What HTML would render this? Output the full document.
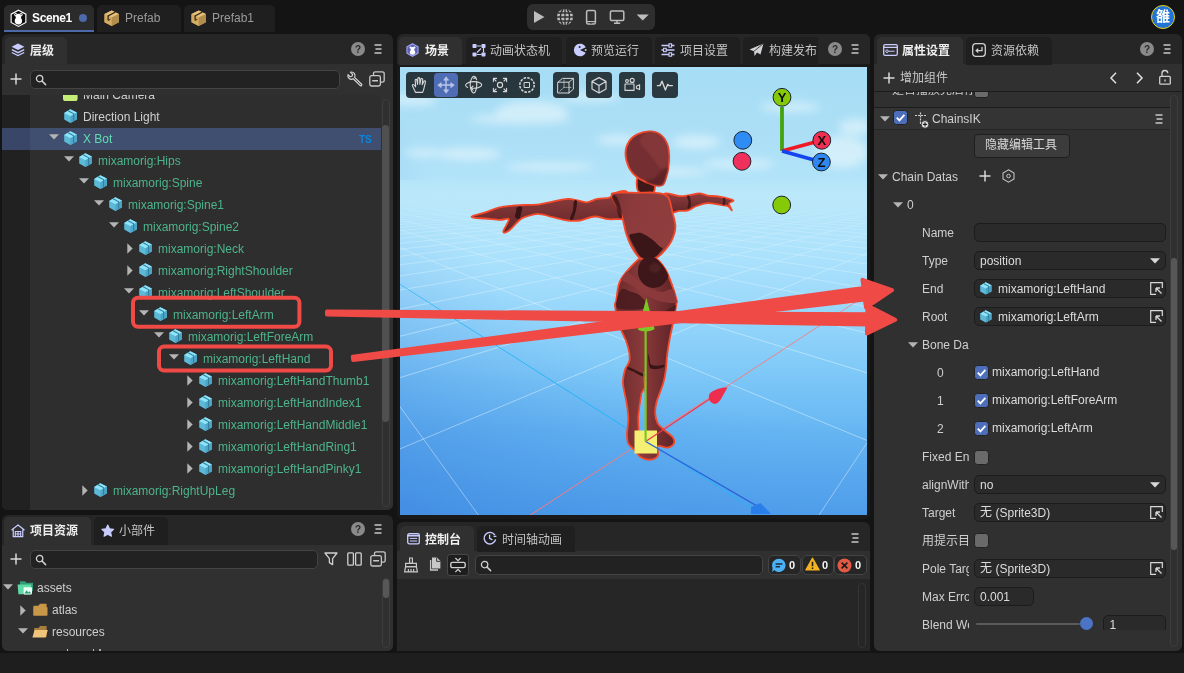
<!DOCTYPE html>
<html><head><meta charset="utf-8"><title>LayaAir IDE</title>
<style>
*{box-sizing:border-box;margin:0;padding:0}
html,body{width:1184px;height:673px;overflow:hidden}
body{background:#141414;font-family:"Liberation Sans",sans-serif;font-size:12px;color:#cfcfcf;position:relative;line-height:14px}
.a{position:absolute}
svg{display:block;position:absolute;overflow:visible}
svg.cj{position:absolute}
svg.cj text{font-family:"Liberation Sans","Noto Sans CJK SC",sans-serif;font-size:12px}
.panel{position:absolute;background:#262626;border-radius:6px;overflow:hidden}
.ptab{position:absolute;background:#303030;border-radius:5px 5px 0 0}
.ptab.off{background:#1f1f1f}
.body{position:absolute;background:#303030}
.inp{position:absolute;background:#222;border:1px solid #444;border-radius:5px}
.fld{position:absolute;background:#2a2a2a;border:1px solid #1c1c1c;border-radius:5px}
.t{position:absolute;white-space:nowrap;height:14px;line-height:14px}
.g{color:#4db48c}
.row{position:absolute;left:0;width:100%;height:22px}
.lbl{position:absolute;white-space:nowrap;height:14px;line-height:14px;color:#cfcfcf;overflow:hidden}
.cb{position:absolute;width:14px;height:14px;border-radius:3.5px;background:#4d6fbb;border:1px solid #222}
.cb.off{background:#6a6a6a}
</style></head><body><div id="root" style="position:absolute;left:0;top:0;width:1184px;height:673px;opacity:0.999">
<svg width="0" height="0" style="position:absolute">
<defs>
<symbol id="cube" viewBox="0 0 14 15">
<path d="M6.6 0.2 L13.4 3.6 L13.4 11 L6.6 14.6 L0.2 11 L0.2 4.2Z" fill="#5db9d8"/>
<path d="M6.6 0.2 L13.4 3.6 L6.8 7.4 L0.2 4.2Z" fill="#8ee5fa"/>
<path d="M6.8 7.4 L13.4 3.6 L13.4 11 L6.6 14.6Z" fill="#4ba6c8"/>
<path d="M3.6 2 L4.8 1.3 L10.6 4.6 L10.6 12.4 L9.5 13 L9.5 5.2Z" fill="#347d9b"/>
</symbol>
<symbol id="box" viewBox="0 0 16 17">
<g transform="translate(16,0) scale(-1,1)">
<path d="M8 0.5 L15.5 4 L15.5 12.5 L8 16.5 L0.5 12.5 L0.5 4Z" fill="#c8a05a"/>
<path d="M8 0.5 L15.5 4 L8 7.8 L0.5 4Z" fill="#e6c27c"/>
<path d="M0.5 4 L8 7.8 L8 16.5 L0.5 12.5Z" fill="#b38d4a"/>
<path d="M8 7.8 L15.5 4 L15.5 12.5 L8 16.5Z" fill="#d3ab62"/>
<path d="M3.6 2.4 L4.9 1.8 L12.4 5.6 L12.4 10.6 L11 11.2 L11 6.3Z" fill="#3a2d18"/>
<path d="M9.4 9.6L11 10.4" stroke="#3a2d18" stroke-width="1"/>
</g>
</symbol>
<symbol id="help" viewBox="0 0 14 14"><circle cx="7" cy="7" r="7" fill="#8a8a8a"/><text x="7" y="10.6" font-family="Liberation Sans" font-weight="bold" font-size="10" text-anchor="middle" fill="#2a2a2a">?</text></symbol>
<symbol id="menu" viewBox="0 0 8 10"><path d="M0.5 1H7.5M1.5 5H7.5M0.5 9H7.5" stroke="#c8c8c8" stroke-width="1.4" fill="none"/></symbol>
<symbol id="mag" viewBox="0 0 12 12"><circle cx="4.6" cy="4.6" r="3.2" stroke="#d0d0d0" stroke-width="1.3" fill="none"/><path d="M7 7L10.6 10.6" stroke="#d0d0d0" stroke-width="1.5" stroke-linecap="round"/></symbol>
<symbol id="plus" viewBox="0 0 12 12"><path d="M6 0.5V11.5M0.5 6H11.5" stroke="#d8d8d8" stroke-width="1.5"/></symbol>
<symbol id="pick" viewBox="0 0 13 13"><path d="M12.3 6V0.7H0.7V12.3H6" stroke="#d8d8d8" stroke-width="1.2" fill="none"/><path d="M6 6H10M6 6V10M6.3 6.3L11.5 11.5" stroke="#d8d8d8" stroke-width="1.3" fill="none"/></symbol>
</defs></svg>

<!-- ===== top bar ===== -->
<div class="a" id="tab1" style="left:4px;top:5px;width:90px;height:27px;background:#2b2b2b;border-radius:5px 5px 0 0;border-bottom:2px solid #4c69a8"></div>
<div class="a" style="left:97px;top:5px;width:84px;height:27px;background:#1f1f1f;border-radius:5px 5px 0 0"></div>
<div class="a" style="left:184px;top:5px;width:91px;height:27px;background:#1f1f1f;border-radius:5px 5px 0 0"></div>
<svg class="a" style="left:10.4px;top:8.6px" width="17" height="18.6" viewBox="0 0 18 19"><path d="M9 0.9L16.8 5.1V13.9L9 18.1L1.2 13.9V5.1Z" fill="#0c0c0c" stroke="#fff" stroke-width="1.2"/><circle cx="6.1" cy="5.6" r="1.7" fill="#fff"/><circle cx="11.7" cy="5.6" r="1.7" fill="#fff"/><circle cx="8.9" cy="7.6" r="3" fill="#fff"/><ellipse cx="8.9" cy="12.4" rx="3.9" ry="3.7" fill="#fff"/><circle cx="6.1" cy="5.6" r="0.7" fill="#0c0c0c"/><circle cx="11.7" cy="5.6" r="0.7" fill="#0c0c0c"/></svg>
<div class="t" style="left:32px;top:11px;color:#fff;font-weight:bold;letter-spacing:-0.35px">Scene1</div>
<div class="a" style="left:79px;top:14px;width:8px;height:8px;border-radius:4px;background:#4c69a8"></div>
<svg class="a" style="left:104px;top:9.5px" width="15.4" height="16.6"><use href="#box"/></svg>
<div class="t" style="left:125px;top:11px;color:#9a9a9a">Prefab</div>
<svg class="a" style="left:191px;top:9.5px" width="15.4" height="16.6"><use href="#box"/></svg>
<div class="t" style="left:212px;top:11px;color:#9a9a9a">Prefab1</div>

<div class="a" style="left:527px;top:4px;width:128px;height:26px;background:#2e2e2e;border-radius:6px"></div>
<svg class="a" style="left:527px;top:4px" width="128" height="26" viewBox="0 0 128 26">
<path d="M7 7V19L17.4 13Z" fill="#bdbdbd"/>
<circle cx="38" cy="13" r="8" fill="#bdbdbd"/>
<g stroke="#2e2e2e" stroke-width="1.3" fill="none"><path d="M30 13H46M31 9H45M31 17H45M38 5V21"/><path d="M36 5.2C32.6 9 32.6 17 36 20.8M40 5.2C43.4 9 43.4 17 40 20.8"/></g>
<rect x="59.6" y="6.4" width="8.8" height="13.6" rx="1.6" fill="none" stroke="#bdbdbd" stroke-width="1.5"/><path d="M59.6 17.6H68.4" stroke="#bdbdbd" stroke-width="1.2"/><path d="M63 19H65" stroke="#2e2e2e" stroke-width="0.9"/>
<rect x="83.4" y="7" width="13.4" height="9.4" rx="1.2" fill="none" stroke="#bdbdbd" stroke-width="1.5"/><path d="M90 16.4V18.6M87 19.2H93.2" stroke="#bdbdbd" stroke-width="1.5"/>
<path d="M109.6 10.4H121.8L115.7 16.6Z" fill="#bdbdbd"/>
</svg>

<div class="a" style="left:1150.8px;top:4.8px;width:24.4px;height:24.4px;border-radius:12.2px;background:#2173d4;border:1.5px solid #ecce12"></div>
<svg class="cj" width="14.00" height="16.80" viewBox="0 0 14.00 16.80" style="left:1156.1px;top:9.4px"><text x="0" y="12.3" style="font-size:14px" font-weight="bold" fill="#fff">雒</text></svg>

<!-- ===== hierarchy panel ===== -->
<div class="panel" id="hier" style="left:2px;top:34px;width:391px;height:476px">
 <div class="ptab" style="left:3px;top:3px;width:62px;height:28px"></div>
 <div class="body" style="left:0;top:30px;width:391px;height:31px"></div>
 <div class="body" id="tree" style="left:0;top:61px;width:391px;height:415px;background:#2e2e2e;overflow:hidden">
<div class="a" style="left:0;top:0;width:28px;height:415px;background:#212121"></div>
<div class="a" id="treerows" style="left:0;top:0;width:379px;height:415px">
<div class="row" style="top:-11px"><svg style="left:61.4px;top:3px" width="14.6" height="14" viewBox="0 0 14.6 14"><rect x="0" y="0" width="14.6" height="14" rx="2.6" fill="#c4ee76"/></svg><div class="t" style="left:81px;top:4px;color:#cfcfcf">Main Camera</div></div>
<div class="row" style="top:11px"><svg style="left:61.7px;top:2.9px" width="13.4" height="14.5"><use href="#cube"/></svg><div class="t" style="left:81px;top:4px;color:#cfcfcf">Direction Light</div></div>
<div class="row" style="top:33px;background:#404e70"><svg style="left:47px;top:6.2px" width="10" height="6"><path d="M0 0.3H10L5 5.6Z" fill="#b4b4b4"/></svg><svg style="left:61.7px;top:2.9px" width="13.4" height="14.5"><use href="#cube"/></svg><div class="t" style="left:81px;top:4px;color:#60dcae">X Bot</div><div class="t" style="left:357px;top:5px;color:#0b84dd;font-size:10px;font-weight:bold">TS</div></div>
<div class="row" style="top:55px"><svg style="left:62px;top:6.2px" width="10" height="6"><path d="M0 0.3H10L5 5.6Z" fill="#b4b4b4"/></svg><svg style="left:76.7px;top:2.9px" width="13.4" height="14.5"><use href="#cube"/></svg><div class="t" style="left:96px;top:4px;color:#4db48c">mixamorig:Hips</div></div>
<div class="row" style="top:77px"><svg style="left:77px;top:6.2px" width="10" height="6"><path d="M0 0.3H10L5 5.6Z" fill="#b4b4b4"/></svg><svg style="left:91.7px;top:2.9px" width="13.4" height="14.5"><use href="#cube"/></svg><div class="t" style="left:111px;top:4px;color:#4db48c">mixamorig:Spine</div></div>
<div class="row" style="top:99px"><svg style="left:92px;top:6.2px" width="10" height="6"><path d="M0 0.3H10L5 5.6Z" fill="#b4b4b4"/></svg><svg style="left:106.7px;top:2.9px" width="13.4" height="14.5"><use href="#cube"/></svg><div class="t" style="left:126px;top:4px;color:#4db48c">mixamorig:Spine1</div></div>
<div class="row" style="top:121px"><svg style="left:107px;top:6.2px" width="10" height="6"><path d="M0 0.3H10L5 5.6Z" fill="#b4b4b4"/></svg><svg style="left:121.7px;top:2.9px" width="13.4" height="14.5"><use href="#cube"/></svg><div class="t" style="left:141px;top:4px;color:#4db48c">mixamorig:Spine2</div></div>
<div class="row" style="top:143px"><svg style="left:125px;top:4.6px" width="6" height="11"><path d="M0.3 0.3V10.7L5.7 5.5Z" fill="#b4b4b4"/></svg><svg style="left:136.7px;top:2.9px" width="13.4" height="14.5"><use href="#cube"/></svg><div class="t" style="left:156px;top:4px;color:#4db48c">mixamorig:Neck</div></div>
<div class="row" style="top:165px"><svg style="left:125px;top:4.6px" width="6" height="11"><path d="M0.3 0.3V10.7L5.7 5.5Z" fill="#b4b4b4"/></svg><svg style="left:136.7px;top:2.9px" width="13.4" height="14.5"><use href="#cube"/></svg><div class="t" style="left:156px;top:4px;color:#4db48c">mixamorig:RightShoulder</div></div>
<div class="row" style="top:187px"><svg style="left:122px;top:6.2px" width="10" height="6"><path d="M0 0.3H10L5 5.6Z" fill="#b4b4b4"/></svg><svg style="left:136.7px;top:2.9px" width="13.4" height="14.5"><use href="#cube"/></svg><div class="t" style="left:156px;top:4px;color:#4db48c">mixamorig:LeftShoulder</div></div>
<div class="row" style="top:209px"><svg style="left:137px;top:6.2px" width="10" height="6"><path d="M0 0.3H10L5 5.6Z" fill="#b4b4b4"/></svg><svg style="left:151.7px;top:2.9px" width="13.4" height="14.5"><use href="#cube"/></svg><div class="t" style="left:171px;top:4px;color:#4db48c">mixamorig:LeftArm</div></div>
<div class="row" style="top:231px"><svg style="left:152px;top:6.2px" width="10" height="6"><path d="M0 0.3H10L5 5.6Z" fill="#b4b4b4"/></svg><svg style="left:166.7px;top:2.9px" width="13.4" height="14.5"><use href="#cube"/></svg><div class="t" style="left:186px;top:4px;color:#4db48c">mixamorig:LeftForeArm</div></div>
<div class="row" style="top:253px"><svg style="left:167px;top:6.2px" width="10" height="6"><path d="M0 0.3H10L5 5.6Z" fill="#b4b4b4"/></svg><svg style="left:181.7px;top:2.9px" width="13.4" height="14.5"><use href="#cube"/></svg><div class="t" style="left:201px;top:4px;color:#4db48c">mixamorig:LeftHand</div></div>
<div class="row" style="top:275px"><svg style="left:185px;top:4.6px" width="6" height="11"><path d="M0.3 0.3V10.7L5.7 5.5Z" fill="#b4b4b4"/></svg><svg style="left:196.7px;top:2.9px" width="13.4" height="14.5"><use href="#cube"/></svg><div class="t" style="left:216px;top:4px;color:#4db48c">mixamorig:LeftHandThumb1</div></div>
<div class="row" style="top:297px"><svg style="left:185px;top:4.6px" width="6" height="11"><path d="M0.3 0.3V10.7L5.7 5.5Z" fill="#b4b4b4"/></svg><svg style="left:196.7px;top:2.9px" width="13.4" height="14.5"><use href="#cube"/></svg><div class="t" style="left:216px;top:4px;color:#4db48c">mixamorig:LeftHandIndex1</div></div>
<div class="row" style="top:319px"><svg style="left:185px;top:4.6px" width="6" height="11"><path d="M0.3 0.3V10.7L5.7 5.5Z" fill="#b4b4b4"/></svg><svg style="left:196.7px;top:2.9px" width="13.4" height="14.5"><use href="#cube"/></svg><div class="t" style="left:216px;top:4px;color:#4db48c">mixamorig:LeftHandMiddle1</div></div>
<div class="row" style="top:341px"><svg style="left:185px;top:4.6px" width="6" height="11"><path d="M0.3 0.3V10.7L5.7 5.5Z" fill="#b4b4b4"/></svg><svg style="left:196.7px;top:2.9px" width="13.4" height="14.5"><use href="#cube"/></svg><div class="t" style="left:216px;top:4px;color:#4db48c">mixamorig:LeftHandRing1</div></div>
<div class="row" style="top:363px"><svg style="left:185px;top:4.6px" width="6" height="11"><path d="M0.3 0.3V10.7L5.7 5.5Z" fill="#b4b4b4"/></svg><svg style="left:196.7px;top:2.9px" width="13.4" height="14.5"><use href="#cube"/></svg><div class="t" style="left:216px;top:4px;color:#4db48c">mixamorig:LeftHandPinky1</div></div>
<div class="row" style="top:385px"><svg style="left:80px;top:4.6px" width="6" height="11"><path d="M0.3 0.3V10.7L5.7 5.5Z" fill="#b4b4b4"/></svg><svg style="left:91.7px;top:2.9px" width="13.4" height="14.5"><use href="#cube"/></svg><div class="t" style="left:111px;top:4px;color:#4db48c">mixamorig:RightUpLeg</div></div>
</div>
<div class="a" style="left:0;top:33px;width:28px;height:22px;background:#3a4668"></div>
<div class="a" style="left:379px;top:0;width:12px;height:415px;background:#303030"></div>
<div class="a" style="left:380px;top:4px;width:8px;height:408px;border:1px solid #3d3d3d;border-radius:4px"></div>
<div class="a" style="left:380.2px;top:30px;width:7px;height:297px;background:#505050;border-radius:3.5px"></div>
</div>
<!-- hierarchy header + toolbar -->
<svg style="left:9px;top:9px" width="14" height="14" viewBox="0 0 14 14"><path d="M7 0.6L13.4 3.8L7 7L0.6 3.8Z" fill="#c9ccff"/><path d="M0.8 6.6L7 9.7L13.2 6.6M0.8 9.5L7 12.6L13.2 9.5" stroke="#c9ccff" stroke-width="1.3" fill="none"/></svg>
<svg class="cj" width="24.00" height="14.40" viewBox="0 0 24.00 14.40" style="left:28px;top:10.2px"><text x="0" y="10.6" font-weight="bold" fill="#eeeeee">层级</text></svg>
<svg style="left:349px;top:8px" width="14" height="14"><use href="#help"/></svg>
<svg style="left:372px;top:10px" width="8" height="10"><use href="#menu"/></svg>
<svg style="left:8px;top:39px" width="12" height="12"><use href="#plus"/></svg>
<div class="inp" style="left:28px;top:36px;width:310px;height:19px"></div>
<svg style="left:33px;top:40px" width="12" height="12"><use href="#mag"/></svg>
<svg style="left:345px;top:37px" width="16" height="16" viewBox="0 0 16 16"><path d="M14.6 13.2L7.6 6.4A3.6 3.6 0 0 0 3.4 1.2L5.6 3.4L5 5.2L3.2 5.8L1 3.6A3.6 3.6 0 0 0 6.2 7.8L13.2 14.6A1 1 0 0 0 14.6 13.2Z" stroke="#d4d4d4" stroke-width="1.2" fill="none" stroke-linejoin="round"/></svg>
<svg style="left:367px;top:37px" width="16" height="16" viewBox="0 0 16 16"><path d="M4.5 4.2V2.6A1.8 1.8 0 0 1 6.3 0.8H13.4A1.8 1.8 0 0 1 15.2 2.6V9.4A1.8 1.8 0 0 1 13.4 11.2H11.8" stroke="#c8c8c8" stroke-width="1.3" fill="none"/><rect x="0.8" y="4.6" width="10.6" height="10.4" rx="1.8" stroke="#c8c8c8" stroke-width="1.3" fill="none"/><path d="M3.2 9.8H9" stroke="#c8c8c8" stroke-width="1.6"/></svg>

</div>

<!-- ===== assets panel ===== -->
<div class="panel" id="assets" style="left:2px;top:515px;width:391px;height:136px">
 <div class="ptab" style="left:1.5px;top:2px;width:87.5px;height:29px"></div>
 <div class="ptab off" style="left:92px;top:2px;width:74px;height:29px"></div>
 <div class="body" style="left:0;top:30px;width:391px;height:106px"></div>
<svg style="left:9px;top:8.6px" width="14" height="14" viewBox="0 0 15 15"><path d="M7.5 1L14 6.2H12.6V13.6H2.4V6.2H1Z" stroke="#c9ccff" stroke-width="1.3" fill="none" stroke-linejoin="round"/><path d="M4.6 13.4V8H10.4V13.4M4.6 10.7H10.4M7.5 8V13.4" stroke="#c9ccff" stroke-width="1.2" fill="none"/></svg>
<svg class="cj" width="48.00" height="14.40" viewBox="0 0 48.00 14.40" style="left:28px;top:9.2px"><text x="0" y="10.6" font-weight="bold" fill="#eeeeee">项目资源</text></svg>
<svg style="left:99px;top:9px" width="13.5" height="13.5" viewBox="0 0 15 15"><path d="M7.5 1.2L9.5 5.3L14 5.9L10.7 9L11.6 13.5L7.5 11.3L3.4 13.5L4.3 9L1 5.9L5.5 5.3Z" fill="#c9ccff" stroke="#c9ccff" stroke-width="1.2" stroke-linejoin="round"/></svg>
<svg class="cj" width="36.00" height="14.40" viewBox="0 0 36.00 14.40" style="left:117px;top:9.2px"><text x="0" y="10.6" fill="#c4c4c4">小部件</text></svg>
<svg style="left:349px;top:7px" width="14" height="14"><use href="#help"/></svg>
<svg style="left:372px;top:9px" width="8" height="10"><use href="#menu"/></svg>
<svg style="left:8px;top:38px" width="12" height="12"><use href="#plus"/></svg>
<div class="inp" style="left:28px;top:35px;width:288px;height:19px"></div>
<svg style="left:33px;top:39px" width="12" height="12"><use href="#mag"/></svg>
<svg style="left:322px;top:37px" width="14" height="14" viewBox="0 0 14 14"><path d="M1 1H13L8.6 6.6V12.6L5.4 10.6V6.6Z" stroke="#d0d0d0" stroke-width="1.3" fill="none" stroke-linejoin="round"/></svg>
<svg style="left:345px;top:37px" width="15" height="14" viewBox="0 0 15 14"><rect x="0.8" y="0.8" width="5.6" height="12.4" rx="1" stroke="#d0d0d0" stroke-width="1.3" fill="none"/><rect x="8.6" y="0.8" width="5.6" height="12.4" rx="1" stroke="#d0d0d0" stroke-width="1.3" fill="none"/></svg>
<svg style="left:368px;top:36px" width="16" height="16" viewBox="0 0 16 16"><path d="M4.5 4.2V2.6A1.8 1.8 0 0 1 6.3 0.8H13.4A1.8 1.8 0 0 1 15.2 2.6V9.4A1.8 1.8 0 0 1 13.4 11.2H11.8" stroke="#c8c8c8" stroke-width="1.3" fill="none"/><rect x="0.8" y="4.6" width="10.6" height="10.4" rx="1.8" stroke="#c8c8c8" stroke-width="1.3" fill="none"/><path d="M3.2 9.8H9" stroke="#c8c8c8" stroke-width="1.6"/></svg>
<!-- rows -->
<svg style="left:1px;top:69.4px" width="10" height="6"><path d="M0 0.3H10L5 5.6Z" fill="#b4b4b4"/></svg>
<svg style="left:15px;top:64px" width="17" height="16" viewBox="0 0 17 16"><path d="M3 2.2H8L9.4 3.8H16V12H3Z" fill="#2f9c74"/><path d="M0.6 5.4H14.4L13.6 15.2H1.4Z" fill="#5fd9a6"/><rect x="6.6" y="8.2" width="8.4" height="7.2" rx="0.8" fill="#eafff5"/><path d="M7.4 14.6L9.6 11.2L11.2 13.4L12.4 12.2L14.2 14.6Z" fill="#2f9c74"/></svg>
<div class="t" style="left:35px;top:66px">assets</div>
<svg style="left:18px;top:90px" width="6" height="11"><path d="M0.3 0.3V10.7L5.7 5.5Z" fill="#b4b4b4"/></svg>
<svg style="left:31px;top:88px" width="15" height="13" viewBox="0 0 15 13"><path d="M0.5 2.8H5.4L7 0.8H13.6V12.4H0.5Z" fill="#c89848"/><path d="M0.5 4.2H14.5V12.4H0.5Z" fill="#c89848"/></svg>
<div class="t" style="left:50px;top:88px">atlas</div>
<svg style="left:16px;top:113.4px" width="10" height="6"><path d="M0 0.3H10L5 5.6Z" fill="#b4b4b4"/></svg>
<svg style="left:30px;top:110px" width="16" height="13" viewBox="0 0 16 13"><path d="M2.2 3H6.6L8 1H14.6V12H2.2Z" fill="#a87e3c"/><path d="M0.4 12.4L2.6 5H15.8L13.6 12.4Z" fill="#f0c67a"/></svg>
<div class="t" style="left:50px;top:110px">resources</div>
<div class="a" style="left:65.2px;top:134px;width:1.3px;height:2px;background:#bdbdbd"></div><div class="a" style="left:91px;top:134px;width:1.3px;height:2px;background:#bdbdbd"></div><div class="a" style="left:96.5px;top:134px;width:2.5px;height:2px;background:#a8a8a8"></div>
<div class="a" style="left:379px;top:62px;width:12px;height:74px;background:#303030"></div>
<div class="a" style="left:379.5px;top:63px;width:8px;height:70px;border:1px solid #3d3d3d;border-radius:4px"></div>
<div class="a" style="left:380.5px;top:64px;width:6px;height:19px;background:#575757;border-radius:3px"></div>
</div>

<!-- ===== scene panel ===== -->
<div class="panel" id="scene" style="left:397px;top:34px;width:473px;height:485px">
 <div class="body" style="left:0;top:30px;width:473px;height:455px;background:#1a1a1a"></div>
<div class="a" style="left:1px;top:0;width:472px;height:485px">
 <div class="ptab" style="left:1px;top:3px;width:63px;height:28px"></div>
 <div class="ptab off" style="left:68px;top:3px;width:96px;height:28px"></div>
 <div class="ptab off" style="left:168px;top:3px;width:86px;height:28px"></div>
 <div class="ptab off" style="left:257px;top:3px;width:85px;height:28px"></div>
 <div class="ptab off" style="left:345px;top:3px;width:78px;height:28px;border-radius:5px 0 0 0"></div>
 <div class="a" style="left:420px;top:0;width:52px;height:30px;background:#262626"></div>
<svg style="left:7.8px;top:9px" width="13" height="14" viewBox="0 0 14 15"><path d="M7 0.7L13 4.1V10.9L7 14.3L1 10.9V4.1Z" fill="#5c61bc" stroke="#a6a9f2" stroke-width="1.1"/><circle cx="5" cy="4.9" r="1.2" fill="#fff"/><circle cx="9" cy="4.9" r="1.2" fill="#fff"/><circle cx="7" cy="6.3" r="2.1" fill="#fff"/><ellipse cx="7" cy="9.8" rx="2.9" ry="2.7" fill="#fff"/></svg>
<svg class="cj" width="24.00" height="14.40" viewBox="0 0 24.00 14.40" style="left:27px;top:9.5px"><text x="0" y="10.6" font-weight="bold" fill="#f0f0f0">场景</text></svg>
<svg style="left:74px;top:9px" width="14" height="14" viewBox="0 0 14 14"><rect x="0.5" y="1" width="4" height="4" rx="0.8" fill="#c9ccff"/><rect x="9.5" y="1" width="4" height="4" rx="0.8" fill="#c9ccff"/><rect x="0.5" y="9.5" width="4" height="4" rx="0.8" fill="#c9ccff"/><rect x="9.5" y="9.5" width="4" height="4" rx="0.8" fill="#c9ccff"/><path d="M4.5 3H9.5M11.5 5V9.5M4.5 11.5H9.5M9 5.5L5 9.5" stroke="#c9ccff" stroke-width="1.2" fill="none"/></svg>
<svg class="cj" width="60.00" height="14.40" viewBox="0 0 60.00 14.40" style="left:92px;top:9.5px"><text x="0" y="10.6" fill="#c4c4c4">动画状态机</text></svg>
<svg style="left:175px;top:9px" width="14" height="14" viewBox="0 0 14 14"><path d="M7 7L12.8 4.2A6.3 6.3 0 1 0 12.8 9.8Z" fill="#c9ccff"/><circle cx="6.6" cy="4" r="1" fill="#262626"/><circle cx="12.6" cy="7" r="1" fill="#c9ccff"/></svg>
<svg class="cj" width="48.00" height="14.40" viewBox="0 0 48.00 14.40" style="left:193px;top:9.5px"><text x="0" y="10.6" fill="#c4c4c4">预览运行</text></svg>
<svg style="left:263px;top:9px" width="14" height="14" viewBox="0 0 14 14"><path d="M0.5 2.5H13.5M0.5 7H13.5M0.5 11.5H13.5" stroke="#c9ccff" stroke-width="1.3"/><rect x="8" y="0.8" width="2.6" height="3.4" fill="#1f1f1f" stroke="#c9ccff" stroke-width="1.1"/><rect x="2.6" y="5.3" width="2.6" height="3.4" fill="#1f1f1f" stroke="#c9ccff" stroke-width="1.1"/><rect x="8" y="9.8" width="2.6" height="3.4" fill="#1f1f1f" stroke="#c9ccff" stroke-width="1.1"/></svg>
<svg class="cj" width="48.00" height="14.40" viewBox="0 0 48.00 14.40" style="left:282px;top:9.5px"><text x="0" y="10.6" fill="#c4c4c4">项目设置</text></svg>
<svg style="left:351px;top:9px" width="15" height="14" viewBox="0 0 15 14"><path d="M14.5 0.5L0.5 6.5L5 8.2L5.6 13L8 9.6L11.5 11.5Z" fill="#d2d2d6"/><path d="M14.5 0.5L5 8.2" stroke="#1f1f1f" stroke-width="0.8"/></svg>
<svg class="cj" width="48.00" height="14.40" viewBox="0 0 48.00 14.40" style="left:371px;top:9.5px"><text x="0" y="10.6" fill="#c4c4c4">构建发布</text></svg>
<div class="a" style="left:420px;top:0;width:52px;height:30px;background:#262626"></div>
<svg style="left:430px;top:8px" width="14" height="14"><use href="#help"/></svg>
<svg style="left:453px;top:10px" width="8" height="10"><use href="#menu"/></svg>
<div class="a" id="viewport" style="left:2px;top:33px;width:467px;height:448px;overflow:hidden;background:#9fdcf8">
<svg id="scenesvg" style="left:0;top:0" width="467" height="448" viewBox="0 0 467 448">
<defs>
<linearGradient id="sky" x1="0" y1="0" x2="0" y2="1"><stop offset="0.000" stop-color="#a6ddf5"/><stop offset="0.148" stop-color="#acdff6"/><stop offset="0.230" stop-color="#b0e2f8"/><stop offset="0.268" stop-color="#b4e5f9"/><stop offset="0.320" stop-color="#b1e4fb"/><stop offset="0.371" stop-color="#afe4fc"/><stop offset="0.445" stop-color="#a6dffc"/><stop offset="0.521" stop-color="#9ad8fb"/><stop offset="0.669" stop-color="#80caf8"/><stop offset="0.817" stop-color="#66b6f3"/><stop offset="0.966" stop-color="#59a9ef"/><stop offset="1.000" stop-color="#56a6ee"/></linearGradient>
<linearGradient id="fog" x1="0" y1="0" x2="0" y2="1"><stop offset="0" stop-color="#b4e5f9" stop-opacity="1"/><stop offset="0.12" stop-color="#b3e5fa" stop-opacity="0.8"/><stop offset="0.35" stop-color="#b0e4fc" stop-opacity="0.45"/><stop offset="0.7" stop-color="#9cdafc" stop-opacity="0.14"/><stop offset="1" stop-color="#93d5fb" stop-opacity="0"/></linearGradient>
<radialGradient id="vig" cx="0.95" cy="-0.2" r="1.5"><stop offset="0.66" stop-color="#2b70d6" stop-opacity="0"/><stop offset="1" stop-color="#2b70d6" stop-opacity="0.42"/></radialGradient>
<linearGradient id="bodyg" x1="0" y1="0" x2="1" y2="0.3"><stop offset="0" stop-color="#7c3235"/><stop offset="0.35" stop-color="#8c3a3b"/><stop offset="1" stop-color="#903d3e"/></linearGradient>
<linearGradient id="legg" x1="0" y1="0" x2="1" y2="0"><stop offset="0" stop-color="#6b2a2d"/><stop offset="0.45" stop-color="#8a3a3a"/><stop offset="1" stop-color="#5c2226"/></linearGradient>
<linearGradient id="armg" x1="0" y1="0" x2="0" y2="1"><stop offset="0" stop-color="#8f3d3d"/><stop offset="1" stop-color="#622528"/></linearGradient>
<filter id="blur1" x="-10%" y="-10%" width="120%" height="120%"><feGaussianBlur stdDeviation="0.8"/></filter><filter id="blur6" x="-30%" y="-30%" width="160%" height="160%"><feGaussianBlur stdDeviation="4"/></filter>
<clipPath id="vp"><rect x="0" y="0" width="467" height="448"/></clipPath>
</defs>
<g clip-path="url(#vp)">
<rect width="467" height="448" fill="url(#sky)"/>
<g filter="url(#blur6)" fill="#eaf8fd" opacity="0.6">
<ellipse cx="12" cy="33" rx="26" ry="6"/>
<ellipse cx="132" cy="45" rx="36" ry="11"/>
<ellipse cx="120" cy="52" rx="50" ry="5"/>
<ellipse cx="69" cy="87" rx="32" ry="6"/>
<ellipse cx="24" cy="86" rx="20" ry="4"/>
<ellipse cx="217" cy="73" rx="20" ry="5"/>
<ellipse cx="296" cy="75" rx="24" ry="7"/>
<ellipse cx="339" cy="97" rx="36" ry="5"/>
<ellipse cx="442" cy="85" rx="26" ry="16"/>
<ellipse cx="455" cy="60" rx="16" ry="8"/>
<ellipse cx="190" cy="30" rx="30" ry="5"/>
<ellipse cx="390" cy="40" rx="30" ry="5"/>
<ellipse cx="150" cy="100" rx="45" ry="4"/>
<ellipse cx="270" cy="105" rx="40" ry="4"/>
</g>
<rect y="0" width="467" height="448" fill="url(#vig)"/>
<path d="M417.7 450.0L469.0 372.9M-2.0 382.7L469.0 185.4M-2.0 311.2L469.0 166.2M-2.0 269.7L469.0 155.1M-2.0 242.5L469.0 147.8M-2.0 223.4L469.0 142.7M-2.0 209.2L469.0 138.8M-2.0 198.2L469.0 135.9M-2.0 189.5L469.0 133.6M-2.0 182.4L469.0 131.6M-2.0 176.5L469.0 130.1M-2.0 171.5L469.0 128.7M-2.0 167.3L469.0 127.6M-2.0 163.6L469.0 126.6M-2.0 160.4L469.0 125.7M-2.0 157.6L469.0 125.0M-2.0 155.1L469.0 124.3M-2.0 152.8L469.0 123.7M-2.0 150.8L469.0 123.2M-2.0 149.0L469.0 122.7M-2.0 147.3L469.0 122.2M-2.0 145.8L469.0 121.8M-2.0 144.5L469.0 121.4M-2.0 143.2L469.0 121.1M-2.0 142.0L469.0 120.8M-2.0 140.9L469.0 120.5M-2.0 139.9L469.0 120.2M-2.0 139.0L469.0 120.0M-2.0 138.1L469.0 119.7M-2.0 137.3L469.0 119.5M-2.0 136.5L469.0 119.3M-2.0 135.8L469.0 119.1M-2.0 135.1L469.0 118.9M-2.0 134.5L469.0 118.8M-2.0 133.9L469.0 118.6M-2.0 133.3L469.0 118.5M-2.0 132.8L469.0 118.3M-2.0 132.3L469.0 118.2M-2.0 131.8L469.0 118.1M-2.0 131.3L469.0 117.9M-2.0 130.9L469.0 117.8M-2.0 130.5L469.0 117.7M-2.0 130.1L469.0 117.6M-2.0 129.7L469.0 117.5M-2.0 129.3L469.0 117.4M-2.0 129.0L469.0 117.3M-2.0 128.7L469.0 117.2M-2.0 128.3L469.0 117.1M-2.0 128.0L469.0 117.0M-2.0 127.7L469.0 117.0M-2.0 127.4L469.0 116.9M-2.0 127.2L469.0 116.8M-2.0 126.9L469.0 116.7M-2.0 126.7L469.0 116.7M-2.0 126.4L469.0 116.6M-2.0 126.2L469.0 116.5M-2.0 125.9L469.0 116.5M-2.0 125.7L469.0 116.4M-2.0 125.5L469.0 116.4M-2.0 125.3L469.0 116.3M-2.0 125.1L469.0 116.3M-2.0 124.9L469.0 116.2M-2.0 124.7L469.0 116.1M-2.0 124.5L469.0 116.1M-2.0 124.4L469.0 116.1M-2.0 124.2L469.0 116.0M-2.0 124.0L469.0 116.0M-2.0 123.9L469.0 115.9M-2.0 123.7L469.0 115.9M-2.0 123.6L469.0 115.8M-2.0 123.4L469.0 115.8M-2.0 123.3L469.0 115.8M-2.0 123.1L469.0 115.7M-2.0 123.0L469.0 115.7M-2.0 122.9L469.0 115.7M-2.0 122.7L469.0 115.6M-2.0 122.6L469.0 115.6M-2.0 122.5L469.0 115.6M-2.0 122.4L469.0 115.5M-2.0 122.3L469.0 115.5M-2.0 122.1L468.3 115.5M79.8 450.0L-2.0 336.9M469.0 374.3L-2.0 179.9M469.0 306.4L-2.0 162.5M469.0 266.6L-2.0 152.3M469.0 240.3L-2.0 145.6M469.0 221.7L-2.0 140.8M469.0 207.9L-2.0 137.3M469.0 197.2L-2.0 134.5M469.0 188.6L-2.0 132.4M469.0 181.7L-2.0 130.6M469.0 175.9L-2.0 129.1M469.0 171.0L-2.0 127.8M469.0 166.8L-2.0 126.8M469.0 163.2L-2.0 125.8M469.0 160.0L-2.0 125.0M469.0 157.2L-2.0 124.3M469.0 154.7L-2.0 123.7M469.0 152.5L-2.0 123.1M469.0 150.5L-2.0 122.6M469.0 148.7L-2.0 122.1M469.0 147.1L-2.0 121.7M469.0 145.6L-2.0 121.3M469.0 144.2L-2.0 121.0M469.0 143.0L-2.0 120.7M469.0 141.8L-2.0 120.4M469.0 140.7L-2.0 120.1M469.0 139.8L-2.0 119.8M469.0 138.8L-2.0 119.6M469.0 138.0L-2.0 119.4M469.0 137.2L-2.0 119.2M469.0 136.4L-2.0 119.0M469.0 135.7L-2.0 118.8M469.0 135.0L-2.0 118.6M469.0 134.4L-2.0 118.5M469.0 133.8L-2.0 118.3M469.0 133.2L-2.0 118.2M469.0 132.7L-2.0 118.0M469.0 132.2L-2.0 117.9M469.0 131.7L-2.0 117.8M469.0 131.2L-2.0 117.7M469.0 130.8L-2.0 117.6M469.0 130.4L-2.0 117.4M469.0 130.0L-2.0 117.3M469.0 129.6L-2.0 117.3M469.0 129.3L-2.0 117.2M469.0 128.9L-2.0 117.1M469.0 128.6L-2.0 117.0M469.0 128.3L-2.0 116.9M469.0 127.9L-2.0 116.8M469.0 127.7L-2.0 116.7M469.0 127.4L-2.0 116.7M469.0 127.1L-2.0 116.6M469.0 126.8L-2.0 116.5M469.0 126.6L-2.0 116.5M469.0 126.3L-2.0 116.4M469.0 126.1L-2.0 116.4M469.0 125.9L-2.0 116.3M469.0 125.7L-2.0 116.2M469.0 125.4L-2.0 116.2M469.0 125.2L-2.0 116.1M469.0 125.0L-2.0 116.1M469.0 124.9L-2.0 116.0M469.0 124.7L-2.0 116.0M469.0 124.5L-2.0 115.9M469.0 124.3L-2.0 115.9M469.0 124.1L-2.0 115.9M469.0 124.0L-2.0 115.8M469.0 123.8L-2.0 115.8M469.0 123.7L-2.0 115.7M469.0 123.5L-2.0 115.7M469.0 123.4L-2.0 115.7M469.0 123.2L-2.0 115.6M469.0 123.1L-2.0 115.6M469.0 123.0L-2.0 115.5M469.0 122.8L-2.0 115.5M469.0 122.7L-2.0 115.5M469.0 122.6L-0.5 115.5M469.0 122.4L1.2 115.5M469.0 122.3L2.8 115.5M469.0 122.2L4.5 115.5M469.0 122.1L6.1 115.4" stroke="#fff" stroke-opacity="0.45" stroke-width="0.9" fill="none"/>
<path d="M127.4 450.0L469.0 226.3" stroke="#f47c7c" stroke-width="1" fill="none"/>
<path d="M366.1 450.0L-2.0 216.0" stroke="#27b4f5" stroke-width="1" fill="none"/>
<rect y="113" width="467" height="200" fill="url(#fog)"/>
<mask id="legmask" maskUnits="userSpaceOnUse" x="0" y="0" width="467" height="448"><rect width="467" height="448" fill="#fff"/><path d="M244.3 321.5L241.6 326.4L239.6 339.7L238.3 350.4L239.0 365.0L245.2 365.0L245.3 343.0L245.2 328.0Z" fill="#000"/></mask>
<g mask="url(#legmask)">
<g stroke="#f3482a" stroke-width="1.8" stroke-linejoin="round">
<path d="M72.4 149.2C74.2 148.3 80.9 146.8 85.3 145.4C89.7 144.0 94.3 141.8 98.8 140.7C103.3 139.6 108.2 139.1 112.3 138.7C116.3 138.2 118.6 138.2 123.1 138.0C127.6 137.8 134.3 137.9 139.3 137.3C144.2 136.7 148.1 135.5 152.8 134.6C157.5 133.7 163.6 132.1 167.7 131.9C171.8 131.7 174.1 132.7 177.2 133.3C180.4 133.9 183.2 135.5 186.6 135.3C190.0 135.1 193.6 132.7 197.4 131.9C201.2 131.1 206.8 131.5 209.6 130.6C212.4 129.7 210.9 127.3 214.0 126.5C217.1 125.7 225.0 121.2 228.0 126.0C231.0 130.8 233.0 150.6 232.0 155.0C231.0 159.4 225.8 152.7 221.8 152.2C217.8 151.7 212.7 152.6 208.2 152.2C203.7 151.8 199.4 149.3 194.7 149.5C190.0 149.7 184.4 152.8 179.9 153.5C175.4 154.2 172.2 154.1 167.7 153.5C163.2 152.9 157.7 151.3 152.8 150.2C147.8 149.1 142.7 146.8 138.0 146.8C133.3 146.8 127.7 149.1 124.5 150.2C121.3 151.3 121.5 151.4 119.0 153.5C116.5 155.6 112.0 161.0 109.6 163.0C107.3 165.0 105.9 165.6 104.9 165.7C103.9 165.8 102.8 165.9 103.5 163.7C104.2 161.4 109.5 154.0 108.9 152.2C108.3 150.4 104.0 153.0 100.1 152.9C96.2 152.8 89.6 151.8 85.3 151.5C81.0 151.2 76.7 151.2 74.5 150.8C72.3 150.4 70.6 150.1 72.4 149.2Z" fill="url(#armg)"/>
<path d="M264.0 127.0C265.9 124.4 275.1 129.1 279.6 129.2C284.1 129.3 287.6 128.3 290.9 127.8C294.2 127.3 296.6 126.3 299.4 126.4C302.2 126.5 304.6 128.1 307.9 128.6C311.2 129.1 315.0 128.9 319.2 129.7C323.4 130.5 331.7 132.3 333.3 133.4C334.9 134.5 329.2 134.8 329.0 136.5C328.8 138.2 332.1 142.9 331.9 143.3C331.7 143.7 329.7 139.9 327.6 139.0C325.5 138.1 322.5 138.2 319.2 137.7C315.9 137.2 311.7 136.0 307.9 136.2C304.1 136.4 299.9 137.8 296.6 139.0C293.3 140.2 290.9 142.5 288.1 143.3C285.3 144.1 283.0 143.6 279.6 143.9C276.2 144.2 270.6 147.8 268.0 145.0C265.4 142.2 262.1 129.6 264.0 127.0Z" fill="url(#armg)"/>
<path d="M237.6 110.8C238.8 109.2 242.9 113.8 245.7 115.1C248.5 116.4 253.6 116.4 254.6 118.4C255.6 120.4 254.6 126.0 251.9 127.0C249.2 128.0 240.9 127.3 238.5 124.6C236.1 121.9 236.4 112.4 237.6 110.8Z" fill="#3f181a"/>
<path d="M240.1 191.3C243.8 188.7 245.4 190.0 248.0 190.0C250.6 190.0 252.8 189.2 255.7 191.3C258.6 193.4 262.7 197.8 265.5 202.5C268.3 207.2 270.7 214.3 272.6 219.5C274.5 224.7 276.1 230.8 276.8 233.6C277.4 236.4 277.0 233.3 276.5 236.4C276.0 239.5 274.9 246.6 273.8 252.4C272.7 258.2 270.9 265.3 269.8 271.1C268.7 276.9 267.9 281.8 267.2 287.1C266.5 292.5 266.5 298.3 265.8 303.2C265.1 308.1 264.7 311.2 263.1 316.5C261.6 321.8 257.8 330.3 256.5 335.2C255.2 340.1 254.9 342.3 255.1 345.9C255.3 349.5 256.2 353.7 257.8 356.6C259.4 359.5 262.1 361.1 264.5 363.3C266.9 365.5 270.9 367.8 272.5 370.0C274.1 372.2 274.7 374.9 273.8 376.7C272.9 378.5 269.9 380.3 267.2 380.7C264.5 381.1 259.4 377.7 257.8 379.0C256.2 380.3 259.1 386.4 257.8 388.7C256.5 391.0 252.7 392.5 249.8 392.7C246.9 392.9 242.9 391.6 240.4 390.0C237.9 388.4 237.0 385.5 235.0 383.3C233.0 381.1 229.7 379.4 228.4 376.7C227.1 374.0 227.0 371.5 227.0 367.3C227.0 363.1 228.5 356.7 228.4 351.3C228.3 345.9 227.4 341.0 226.5 335.2C225.6 329.4 223.3 321.8 223.0 316.5C222.7 311.2 223.8 307.2 224.9 303.2C226.0 299.2 229.4 297.0 229.7 292.5C230.1 288.0 228.8 282.2 227.0 276.4C225.2 270.6 221.0 263.9 219.0 257.7C217.0 251.5 215.5 243.0 215.0 239.0C214.5 235.0 215.5 237.3 216.2 233.6C216.9 229.9 217.4 221.4 219.0 216.7C220.6 212.0 222.5 209.6 226.0 205.4C229.5 201.2 236.4 193.9 240.1 191.3Z" fill="url(#legg)"/>
<path d="M212.0 129.5C211.1 125.6 212.0 126.4 216.2 125.8C220.4 125.2 230.7 125.8 237.3 125.8C243.9 125.8 250.6 125.1 255.7 125.8C260.8 126.5 265.0 126.4 267.8 129.8C270.6 133.2 271.3 141.0 272.6 146.1C273.9 151.2 275.6 155.5 275.4 160.2C275.2 164.9 273.3 170.1 271.2 174.3C269.1 178.5 265.3 182.8 262.7 185.6C260.1 188.4 258.2 190.2 255.7 191.3C253.3 192.5 250.6 192.5 248.0 192.5C245.4 192.5 242.8 193.4 240.1 191.3C237.4 189.2 234.1 184.2 231.7 180.0C229.4 175.8 227.7 171.1 226.0 165.9C224.3 160.7 224.1 155.1 221.8 149.0C219.5 142.9 212.9 133.4 212.0 129.5Z" fill="url(#bodyg)"/>
<path d="M249.2 64.3C253.0 64.3 256.9 65.2 259.9 67.3C262.9 69.4 265.6 73.2 267.1 76.8C268.6 80.4 268.9 84.7 269.1 88.7C269.3 92.7 268.7 97.2 268.3 100.6C267.9 104.0 267.4 106.0 266.5 108.9C265.6 111.8 264.7 116.4 262.6 117.9C260.6 119.5 257.0 118.7 254.2 118.2C251.4 117.7 248.6 116.1 245.7 114.8C242.9 113.5 239.9 112.7 237.1 110.3C234.3 107.9 230.9 104.6 229.0 100.6C227.1 96.6 225.5 90.7 225.5 86.3C225.5 81.9 227.0 77.6 229.0 74.4C231.0 71.2 233.9 69.0 237.3 67.3C240.7 65.6 245.4 64.3 249.2 64.3Z" fill="#752f33"/>
</g>
<path d="M240.0 74.6C239.6 70.5 245.9 66.2 249.2 65.1C252.5 64.0 256.8 66.0 259.7 68.0C262.6 70.0 265.1 73.5 266.6 77.0C268.1 80.5 268.3 84.8 268.5 88.7C268.7 92.6 268.6 97.9 267.6 100.3C266.6 102.7 265.0 104.6 262.3 102.9C259.6 101.2 255.3 94.6 251.6 89.9C247.9 85.2 240.4 78.7 240.0 74.6Z" fill="#8b3a3b" opacity="0.7" filter="url(#blur1)"/>
<path d="M262.3 103.2C264.4 101.6 267.2 99.9 267.8 100.8C268.4 101.8 267.0 106.1 266.1 108.9C265.2 111.7 264.2 115.9 262.3 117.4C260.4 118.9 257.2 118.3 254.5 117.8C251.8 117.3 245.7 115.8 245.9 114.5C246.0 113.2 252.7 112.2 255.4 110.3C258.1 108.4 260.2 104.8 262.3 103.2Z" fill="#5c2427" opacity="0.85" filter="url(#blur1)"/>
<path d="M229.4 168.8C229.4 166.5 233.0 167.0 234.8 166.5C236.6 166.0 238.1 165.4 240.1 165.8C242.1 166.2 244.5 167.5 246.7 168.8C248.9 170.1 251.3 171.8 253.5 173.6C255.7 175.4 258.2 178.2 259.7 179.5C261.2 180.8 262.9 180.4 262.7 181.6C262.6 182.8 260.2 185.2 258.8 186.6C257.4 188.0 256.3 189.4 254.4 190.2C252.5 191.0 249.5 191.5 247.2 191.4C244.9 191.3 242.7 191.5 240.6 189.7C238.5 187.9 236.7 183.9 234.8 180.4C232.9 176.9 229.4 171.1 229.4 168.8Z" fill="#3a1618" />
<clipPath id="hipclip"><path d="M240.1 191.3C243.8 188.7 245.4 190.0 248.0 190.0C250.6 190.0 252.8 189.2 255.7 191.3C258.6 193.4 262.7 197.8 265.5 202.5C268.3 207.2 270.7 214.3 272.6 219.5C274.5 224.7 276.1 230.8 276.8 233.6C277.4 236.4 277.0 233.3 276.5 236.4C276.0 239.5 274.9 246.6 273.8 252.4C272.7 258.2 270.9 265.3 269.8 271.1C268.7 276.9 267.9 281.8 267.2 287.1C266.5 292.5 266.5 298.3 265.8 303.2C265.1 308.1 264.7 311.2 263.1 316.5C261.6 321.8 257.8 330.3 256.5 335.2C255.2 340.1 254.9 342.3 255.1 345.9C255.3 349.5 256.2 353.7 257.8 356.6C259.4 359.5 262.1 361.1 264.5 363.3C266.9 365.5 270.9 367.8 272.5 370.0C274.1 372.2 274.7 374.9 273.8 376.7C272.9 378.5 269.9 380.3 267.2 380.7C264.5 381.1 259.4 377.7 257.8 379.0C256.2 380.3 259.1 386.4 257.8 388.7C256.5 391.0 252.7 392.5 249.8 392.7C246.9 392.9 242.9 391.6 240.4 390.0C237.9 388.4 237.0 385.5 235.0 383.3C233.0 381.1 229.7 379.4 228.4 376.7C227.1 374.0 227.0 371.5 227.0 367.3C227.0 363.1 228.5 356.7 228.4 351.3C228.3 345.9 227.4 341.0 226.5 335.2C225.6 329.4 223.3 321.8 223.0 316.5C222.7 311.2 223.8 307.2 224.9 303.2C226.0 299.2 229.4 297.0 229.7 292.5C230.1 288.0 228.8 282.2 227.0 276.4C225.2 270.6 221.0 263.9 219.0 257.7C217.0 251.5 215.5 243.0 215.0 239.0C214.5 235.0 215.5 237.3 216.2 233.6C216.9 229.9 217.4 221.4 219.0 216.7C220.6 212.0 222.5 209.6 226.0 205.4C229.5 201.2 236.4 193.9 240.1 191.3Z"/></clipPath>
<g clip-path="url(#hipclip)">
<ellipse cx="253.5" cy="204.3" rx="15.6" ry="16.6" fill="#3d1719"/>
<ellipse cx="255.0" cy="201.0" rx="6" ry="5" fill="#5a2a2c" opacity="0.6" filter="url(#blur1)"/>
<path d="M225.0 203.6C227.2 203.3 230.9 207.6 233.9 209.8C236.9 212.0 239.5 214.7 242.8 216.9C246.1 219.1 250.2 221.5 253.5 222.8C256.8 224.2 259.6 225.1 262.4 225.0C265.2 224.9 268.2 222.3 270.4 222.3C272.6 222.3 274.7 222.8 275.8 225.0C276.9 227.2 279.8 234.1 277.0 235.6C274.2 237.1 264.2 235.3 258.8 233.9C253.4 232.5 249.1 229.6 244.6 227.1C240.2 224.6 236.1 221.3 232.1 218.7C228.1 216.1 221.7 214.1 220.5 211.6C219.3 209.1 222.8 203.9 225.0 203.6Z" fill="#8c3a3b" opacity="0.95"/>
<path d="M221.0 222.8C223.1 220.1 227.0 223.5 230.3 224.6C233.6 225.7 238.3 226.7 241.0 229.4C243.7 232.1 250.6 239.1 246.7 241.0C242.8 242.9 222.1 244.0 217.8 241.0C213.5 238.0 218.9 225.5 221.0 222.8Z" fill="#4a1c1f" opacity="0.9"/>
<path d="M252.0 251.0C253.7 249.2 260.0 247.2 264.0 245.0C268.0 242.8 274.2 238.0 276.0 238.0C277.8 238.0 277.0 242.5 275.0 245.0C273.0 247.5 267.5 251.2 264.0 253.0C260.5 254.8 256.0 256.3 254.0 256.0C252.0 255.7 250.3 252.8 252.0 251.0Z" fill="#3f181a" opacity="0.7"/>
</g>
<path d="M227.8 300.1C228.8 300.1 231.8 301.4 233.8 302.2C235.8 303.0 237.9 304.4 239.7 305.2C241.5 306.0 243.9 306.1 244.7 306.8C245.5 307.5 245.4 309.4 244.5 309.6C243.6 309.8 241.0 308.7 239.1 307.9C237.2 307.1 235.1 305.6 233.2 304.6C231.3 303.7 228.7 302.9 227.8 302.2C226.9 301.4 226.8 300.1 227.8 300.1Z" fill="#3a1517" />
<path d="M248.3 286.8C248.5 286.4 249.3 290.9 249.8 292.7C250.2 294.5 249.7 296.5 251.0 297.5C252.3 298.5 255.5 298.7 257.6 298.7C259.7 298.7 262.6 297.5 263.7 297.7C264.8 297.9 265.1 299.4 264.1 300.1C263.1 300.8 259.9 301.8 257.6 302.0C255.3 302.2 251.9 302.4 250.4 301.3C248.9 300.2 249.0 297.5 248.6 295.1C248.3 292.7 248.1 287.2 248.3 286.8Z" fill="#3a1517" />
<path d="M174.0 134.0C174.7 132.5 176.7 132.5 177.0 134.0C177.3 135.5 176.7 140.0 176.0 143.0C175.3 146.0 174.0 150.5 173.0 152.0C172.0 153.5 170.0 153.5 170.0 152.0C170.0 150.5 172.3 146.0 173.0 143.0C173.7 140.0 173.3 135.5 174.0 134.0Z" fill="#3a1517" />
<path d="M117.0 140.5C118.0 139.7 121.3 138.9 122.0 140.0C122.7 141.1 121.5 145.0 121.0 147.0C120.5 149.0 120.0 151.5 119.0 152.0C118.0 152.5 115.5 151.2 115.0 150.0C114.5 148.8 115.7 146.6 116.0 145.0C116.3 143.4 116.0 141.3 117.0 140.5Z" fill="#3a1517" />
<path d="M212.0 130.0C212.0 128.3 214.7 127.7 216.0 129.0C217.3 130.3 219.0 134.5 220.0 138.0C221.0 141.5 222.2 148.0 222.0 150.0C221.8 152.0 220.0 151.8 219.0 150.0C218.0 148.2 217.2 142.3 216.0 139.0C214.8 135.7 212.0 131.7 212.0 130.0Z" fill="#3a1517" opacity="0.8"/>
<path d="M287.0 129.5C287.2 128.5 288.8 127.9 289.5 129.0C290.2 130.1 290.9 134.0 291.0 136.0C291.1 138.0 290.6 140.2 290.0 141.0C289.4 141.8 287.8 142.0 287.5 141.0C287.2 140.0 288.6 136.9 288.5 135.0C288.4 133.1 286.8 130.5 287.0 129.5Z" fill="#3a1517" opacity="0.8"/>
<path d="M323.0 131.5C323.3 131.0 324.6 130.9 325.0 131.5C325.4 132.1 325.6 133.9 325.5 135.0C325.4 136.1 325.0 137.5 324.5 138.0C324.0 138.5 322.7 138.6 322.5 138.0C322.3 137.4 323.1 135.6 323.2 134.5C323.3 133.4 322.7 132.0 323.0 131.5Z" fill="#3a1517" opacity="0.8"/>
</g>
<path d="M238.6 364.0L238.1 350.4L239.4 339.7L241.4 326.4L244.5 320.5" stroke="#f3482a" stroke-width="1.6" fill="none" stroke-linejoin="round"/>
<path d="M244.5 320.5L243.6 305.0" stroke="#f3482a" stroke-width="1.2" fill="none"/>
<rect x="234.5" y="363.5" width="22.5" height="23" fill="#f5ef74"/>
<path d="M245.6 374.5L315 328.5" stroke="#ee3a50" stroke-width="1.4"/>
<path d="M245.6 374.5L364 443" stroke="#2b62d8" stroke-width="1.4"/>
<path d="M245.6 374.5V262" stroke="#7cc627" stroke-width="2.2"/>
<path d="M246.4 231L238 262.5C241 265.2 251 265.2 254.6 262Z" fill="#7cc627"/>
<path d="M327.5 320.5C322 320 313 322.5 309.5 327C307.5 331 310 336.5 315 337C319.5 336.5 322 330 327.5 320.5Z" fill="#ee2e4c"/>
<path d="M351 440L360.5 436L371 447L351 447Z" fill="#2a7eea"/>
<g font-family="Liberation Sans" font-weight="bold" font-size="13" text-anchor="middle">
<path d="M382 84V40" stroke="#44a30c" stroke-width="3.8"/>
<path d="M382 84L421.8 73.3" stroke="#ee1a24" stroke-width="3.6"/>
<path d="M382 84L421.4 95" stroke="#1244f0" stroke-width="3.6"/>
<circle cx="382.0" cy="30.3" r="8.9" fill="#86c906" stroke="#1a2430" stroke-width="1"/>
<text x="382.0" y="34.9" fill="#0c0c0c">Y</text>
<circle cx="421.8" cy="73.3" r="8.9" fill="#f22f52" stroke="#1a2430" stroke-width="1"/>
<text x="421.8" y="77.9" fill="#0c0c0c">X</text>
<circle cx="421.4" cy="95.0" r="8.9" fill="#2f88f2" stroke="#1a2430" stroke-width="1"/>
<text x="421.4" y="99.6" fill="#0c0c0c">Z</text>
<circle cx="342.8" cy="73.3" r="8.9" fill="#2f8cf5" stroke="#1a2430" stroke-width="1"/>
<circle cx="342.0" cy="94.3" r="8.9" fill="#f0305c" stroke="#1a2430" stroke-width="1"/>
<circle cx="381.7" cy="138.0" r="8.9" fill="#86c906" stroke="#1a2430" stroke-width="1"/>
</g>
</g>
</svg>
<!-- toolbar -->
<div class="a" style="left:6px;top:5px;width:134px;height:26px;background:#28363e;border-radius:4px"></div>
<div class="a" style="left:34px;top:6px;width:24px;height:24px;background:#4f6db5;border-radius:4px"></div>
<div class="a" style="left:153px;top:5px;width:26px;height:26px;background:#2a3840;border-radius:4px"></div>
<div class="a" style="left:186px;top:5px;width:26px;height:26px;background:#2a3840;border-radius:4px"></div>
<div class="a" style="left:219px;top:5px;width:26px;height:26px;background:#2a3840;border-radius:4px"></div>
<div class="a" style="left:252px;top:5px;width:26px;height:26px;background:#2a3840;border-radius:4px"></div>
<svg style="left:6px;top:5px" width="272" height="26" viewBox="0 0 272 26" fill="none" stroke="#d6d6d6" stroke-width="1.1" stroke-linecap="round" stroke-linejoin="round">
<!-- hand -->
<path d="M9.6 20.4L7.2 15.6C6.6 14.4 5.8 13.2 6.6 12.6C7.4 12.1 8.4 13 9.2 14.2L9.7 14.9L9.2 8.2C9.1 7 10.6 6.8 10.8 8L11.6 12.4L11.8 6.6C11.8 5.3 13.6 5.3 13.7 6.6L13.9 12.2L14.9 7.2C15.1 6 16.8 6.3 16.7 7.5L16.2 12.8L17.8 9.4C18.3 8.3 19.8 8.9 19.5 10L18.2 15.4C17.8 17.4 17.2 19 16.6 20.4Z"/>
<!-- move -->
<path d="M40 6V20M33 13H47" stroke="#b9c6ea" stroke-width="1.4"/><path d="M40 5L37.6 8.2H42.4ZM40 21L37.6 17.8H42.4ZM32 13L35.2 10.6V15.4ZM48 13L44.8 10.6V15.4Z" fill="#b9c6ea" stroke="#b9c6ea" stroke-width="0.6"/>
<!-- rotate -->
<path d="M61.6 15.4C56.6 13 62 9.6 67.4 9.6C72.8 9.6 77.4 11.6 75 14.2C73.4 15.8 69.6 16.6 65 16.2M67 14.2L64.8 16.2L67 18.2"/><path d="M69.8 5.6C67.4 1.6 63.6 8 64.2 14C64.8 19.4 67.4 23 69.4 19.4C70.8 16.6 71 12.6 70.6 9.6M67.8 6.6L69.9 5.4L70.6 7.8"/>
<!-- focus -->
<circle cx="94" cy="13" r="2.6"/><path d="M87.4 9.6V6.4H90.6M97.4 6.4H100.6V9.6M100.6 16.4V19.6H97.4M90.6 19.6H87.4V16.4M87.6 6.6L90 9M100.4 6.6L98 9M100.4 19.4L98 17M87.6 19.4L90 17"/>
<!-- rect circle -->
<circle cx="121" cy="13" r="7.2" stroke-width="1.5" stroke-linecap="butt" stroke-dasharray="2.6 1.17"/><rect x="118.5" y="10.5" width="5" height="5" stroke-width="1"/>
<!-- 3d box -->
<path d="M152 10.2L156.4 6.4H167.4V17.2L163 21H152ZM152 10.2H163V21M163 10.2L167.4 6.4" stroke-width="1"/><path d="M158 8V15.4L153.6 19.4M158 15.4H166" stroke-width="0.7" stroke-dasharray="1 1"/>
<!-- cube -->
<path d="M193 5.6L200 9.4V17L193 21L186 17V9.4ZM186 9.4L193 13.4L200 9.4M193 13.4V21" stroke-width="1.2"/>
<!-- camera -->
<circle cx="221" cy="9" r="1.4"/><circle cx="226.2" cy="8.4" r="2"/><rect x="219" y="12" width="9" height="6.4"/><path d="M230.4 14.2L233.6 12.8V17.6L230.4 16.2Z"/>
<!-- wave -->
<path d="M251.4 13.6H254L256 9.2L259.4 18L261.6 12.4L263 13.6H266.4" stroke-width="1.4"/>
</svg>
</div>
</div>
</div>

<!-- ===== console panel ===== -->
<div class="panel" id="console" style="left:397px;top:522px;width:473px;height:129px;border-radius:6px 6px 0 0">
 <div class="body" style="left:0;top:29px;width:473px;height:28px"></div>
 <div class="body" style="left:0;top:57px;width:473px;height:72px;background:#262626"></div>
<div class="a" style="left:1px;top:0;width:472px;height:129px">
 <div class="ptab" style="left:2px;top:3.5px;width:74px;height:26px"></div>
 <div class="ptab off" style="left:79px;top:3.5px;width:98px;height:26px"></div>
<svg style="left:8.5px;top:10.5px" width="13" height="11.5" viewBox="0 0 13 11.5"><rect x="0.7" y="0.7" width="11.6" height="10.1" rx="1.6" stroke="#c9ccff" stroke-width="1.3" fill="none"/><path d="M0.7 2.6H12.3" stroke="#c9ccff" stroke-width="1.6"/><path d="M2.8 5.4H10.2M2.8 8H10.2" stroke="#c9ccff" stroke-width="1"/></svg>
<svg class="cj" width="36.00" height="14.40" viewBox="0 0 36.00 14.40" style="left:27px;top:10.5px"><text x="0" y="10.6" font-weight="bold" fill="#f0f0f0">控制台</text></svg>
<svg style="left:85px;top:9px" width="14" height="14" viewBox="0 0 14 14"><path d="M11.9 4.2A5.8 5.8 0 1 0 12.6 8.4" stroke="#c9ccff" stroke-width="1.4" fill="none"/><path d="M6.6 3.6V7.4L9.4 8.8" stroke="#c9ccff" stroke-width="1.3" fill="none"/><path d="M10.6 5.4H13.4" stroke="#c9ccff" stroke-width="1.3"/></svg>
<svg class="cj" width="60.00" height="14.40" viewBox="0 0 60.00 14.40" style="left:104px;top:10.5px"><text x="0" y="10.6" fill="#c4c4c4">时间轴动画</text></svg>
<svg style="left:453px;top:11px" width="8" height="10"><use href="#menu"/></svg>
<!-- toolbar -->
<svg style="left:5px;top:35px" width="16" height="16" viewBox="0 0 16 16" fill="none" stroke="#c8c8c8" stroke-width="1.2"><path d="M6.6 1H9.4V6.4H6.6Z"/><path d="M2.6 6.4H13.4V9.6H2.6Z"/><path d="M1.6 14.8L2.6 9.6H13.4L14.4 14.8ZM5.4 14.8V12M8 14.8V12M10.6 14.8V12"/></svg>
<svg style="left:30px;top:35px" width="13" height="15" viewBox="0 0 13 15"><path d="M4 0.6H9L12.4 4V11.4H4Z" fill="#c8c8c8"/><path d="M2.6 3V13H10" stroke="#c8c8c8" stroke-width="1.3" fill="none"/><path d="M8.6 0.6V4.4H12.4" stroke="#303030" stroke-width="0.9" fill="none"/></svg>
<div class="a" style="left:49px;top:32px;width:22px;height:22px;background:#1e1e1e;border:1px solid #484848;border-radius:3px"></div>
<svg style="left:52px;top:35px" width="16" height="16" viewBox="0 0 16 16" fill="none" stroke="#d0d0d0" stroke-width="1.2"><path d="M5.4 1L8 3.6L10.6 1M5.4 15L8 12.4L10.6 15"/><rect x="0.8" y="5.4" width="14.4" height="5.2" rx="1.6" fill="#1e1e1e" stroke-width="1.4"/></svg>
<div class="inp" style="left:77px;top:33px;width:288px;height:20px"></div>
<svg style="left:82px;top:38px" width="12" height="12"><use href="#mag"/></svg>
<div class="a" style="left:370px;top:33px;width:33px;height:20px;background:#262626;border:1px solid #444;border-radius:5px"></div>
<div class="a" style="left:403.5px;top:33px;width:32px;height:20px;background:#262626;border:1px solid #444;border-radius:5px"></div>
<div class="a" style="left:436px;top:33px;width:33px;height:20px;background:#262626;border:1px solid #444;border-radius:5px"></div>
<svg style="left:373px;top:35.6px" width="16" height="15" viewBox="0 0 16 15"><path d="M8 0.8A6.6 6.6 0 1 1 3.2 12L1.2 14.2L1.6 10A6.6 6.6 0 0 1 8 0.8Z" fill="#4bb0f6"/><path d="M4.6 6H11.4M4.6 8.8H9" stroke="#1c2a3a" stroke-width="1.6"/></svg>
<div class="t" style="left:391px;top:35.6px;color:#f4f4f4;font-weight:bold;font-size:11px">0</div>
<svg style="left:406.6px;top:35.4px" width="15" height="14.4" viewBox="0 0 16 15"><path d="M8 1L15.2 13.6H0.8Z" fill="#f5b320" stroke="#f5b320" stroke-width="1.2" stroke-linejoin="round"/><path d="M8 5V9.6M8 11V12.6" stroke="#1e1e1e" stroke-width="1.7"/></svg>
<div class="t" style="left:424px;top:35.6px;color:#f4f4f4;font-weight:bold;font-size:11px">0</div>
<svg style="left:439px;top:35.6px" width="15" height="15" viewBox="0 0 15 15"><circle cx="7.5" cy="7.5" r="7" fill="#e25a44"/><path d="M4.6 4.6L10.4 10.4M10.4 4.6L4.6 10.4" stroke="#1e1e1e" stroke-width="1.7"/></svg>
<div class="t" style="left:457px;top:35.6px;color:#f4f4f4;font-weight:bold;font-size:11px">0</div>
<div class="a" style="left:459.6px;top:61px;width:8.6px;height:65px;border:1px solid #353535;border-radius:4.3px"></div>
</div>

<!-- ===== inspector panel ===== -->
</div>

<div class="panel" id="insp" style="left:874px;top:34px;width:308px;height:617px">
 <div class="body" style="left:0;top:30px;width:308px;height:587px"></div>
 <div class="ptab" style="left:3px;top:3px;width:86px;height:28px"></div>
 <div class="ptab off" style="left:92px;top:3px;width:86px;height:28px"></div>
<svg style="left:9px;top:10px" width="15" height="12" viewBox="0 0 15 12"><rect x="0.7" y="0.7" width="13.6" height="10.6" rx="1.4" stroke="#c9ccff" stroke-width="1.3" fill="none"/><path d="M0.7 3.4H14.3" stroke="#c9ccff" stroke-width="1.2"/><circle cx="4" cy="7.2" r="1.3" stroke="#c9ccff" stroke-width="1" fill="none"/><path d="M5.4 7.2H11.6" stroke="#c9ccff" stroke-width="1.1"/></svg>
<svg class="cj" width="48.00" height="14.40" viewBox="0 0 48.00 14.40" style="left:28px;top:9.5px"><text x="0" y="10.6" font-weight="bold" fill="#f0f0f0">属性设置</text></svg>
<svg style="left:98px;top:9px" width="14" height="14" viewBox="0 0 14 14"><rect x="0.7" y="0.7" width="12.6" height="12.6" rx="3" stroke="#d0d0d0" stroke-width="1.3" fill="none"/><path d="M10 4V7.6H4.4M6.2 5.8L4.2 7.6L6.2 9.4" stroke="#d0d0d0" stroke-width="1.3" fill="none"/></svg>
<svg class="cj" width="48.00" height="14.40" viewBox="0 0 48.00 14.40" style="left:117px;top:9.5px"><text x="0" y="10.6" fill="#c4c4c4">资源依赖</text></svg>
<svg style="left:266px;top:8px" width="14" height="14"><use href="#help"/></svg>
<svg style="left:289px;top:10px" width="8" height="10"><use href="#menu"/></svg>
<svg style="left:9px;top:38px" width="12" height="12"><use href="#plus"/></svg>
<svg class="cj" width="48.00" height="14.40" viewBox="0 0 48.00 14.40" style="left:26px;top:36.5px"><text x="0" y="10.6" fill="#c8c8c8">增加组件</text></svg>
<svg style="left:236px;top:38px" width="7" height="12" viewBox="0 0 7 12"><path d="M6 0.8L1 6L6 11.2" stroke="#e0e0e0" stroke-width="1.5" fill="none"/></svg>
<svg style="left:262px;top:38px" width="7" height="12" viewBox="0 0 7 12"><path d="M1 0.8L6 6L1 11.2" stroke="#e0e0e0" stroke-width="1.5" fill="none"/></svg>
<svg style="left:285px;top:36px" width="12" height="15" viewBox="0 0 12 15"><rect x="0.7" y="6.4" width="10.6" height="7.8" rx="1" stroke="#d0d0d0" stroke-width="1.3" fill="none"/><path d="M3 6.4V3.6a2.9 2.9 0 0 1 5.8 -0.4" stroke="#d0d0d0" stroke-width="1.3" fill="none"/><path d="M6 9.4V11.6" stroke="#d0d0d0" stroke-width="1.3"/></svg>
<div class="a" style="left:0;top:57px;width:308px;height:1px;background:#1c1c1c"></div>
<div class="a" id="ic" style="left:0;top:58px;width:296px;height:538px;overflow:hidden">
<svg class="cj" width="84.00" height="14.40" viewBox="0 0 84.00 14.40" style="left:18px;top:-9.5px"><text x="0" y="10.6" fill="#c8c8c8">是否播放完后停</text></svg>
<div class="cb off" style="margin:-0.5px 0 0 -1px;width:15px;height:15px;left:101px;top:-4px;height:10px;border-radius:0 0 3px 3px"></div>
<div class="a" style="left:0;top:15px;width:296px;height:1px;background:#1c1c1c"></div>
<div class="a" style="left:0;top:16px;width:296px;height:21px;background:#343434"></div>
<div class="a" style="left:0;top:37px;width:296px;height:1px;background:#262626"></div>
<svg style="left:6.0px;top:23.5px" width="10" height="6"><path d="M0 0.3H10L5 5.6Z" fill="#b4b4b4"/></svg>
<div class="cb" style="margin:-0.5px 0 0 -1px;width:15px;height:15px;left:20.3px;top:18.2px"><svg style="left:1px;top:1px" width="11" height="11" viewBox="0 0 11 11"><path d="M1.8 5.6L4.4 8.4L9.4 2.8" stroke="#fff" stroke-width="1.8" fill="none"/></svg></div>
<svg style="left:40px;top:20px" width="16" height="17" viewBox="0 0 16 17" fill="none" stroke="#d0d0d0"><path d="M1 3.5H12M6.5 0.5V10M6.5 10V13" stroke-width="1.2" stroke-dasharray="2 1"/><circle cx="11" cy="12.4" r="3.8" fill="#e8e8e8" stroke="#222" stroke-width="0.8"/><path d="M11 10.2V14.6M8.8 12.4H13.2" stroke="#222" stroke-width="1.2"/></svg>
<div class="t" style="left:58.0px;top:19.7px;color:#d0d0d0">ChainsIK</div>
<svg style="left:281px;top:22px" width="8" height="10"><use href="#menu"/></svg>
<div class="a" style="left:99.6px;top:41.6px;width:96px;height:24px;background:#3c3c3c;border:1px solid #1f1f1f;border-radius:4px"></div>
<svg class="cj" width="72.00" height="14.40" viewBox="0 0 72.00 14.40" style="left:111.3px;top:46.4px"><text x="0" y="10.6" fill="#d8d8d8">隐藏编辑工具</text></svg>
<svg style="left:4.0px;top:82.0px" width="10" height="6"><path d="M0 0.3H10L5 5.6Z" fill="#b4b4b4"/></svg>
<div class="t" style="left:18.0px;top:78.0px;color:#cfcfcf">Chain Datas</div>
<svg style="left:105px;top:78px" width="12" height="12"><use href="#plus"/></svg>
<svg style="left:128.3px;top:76.8px" width="13" height="14" viewBox="0 0 13 14"><path d="M6.5 0.8L12 4V10L6.5 13.2L1 10V4Z" stroke="#c6c6c6" stroke-width="1.05" fill="none"/><circle cx="6.5" cy="7" r="1.8" stroke="#c6c6c6" stroke-width="1" fill="none"/></svg>
<svg style="left:19.0px;top:110.0px" width="10" height="6"><path d="M0 0.3H10L5 5.6Z" fill="#b4b4b4"/></svg>
<div class="t" style="left:33.0px;top:106.0px;color:#cfcfcf">0</div>
<div class="lbl" style="left:48px;top:134.0px;width:47px">Name</div>
<div class="fld" style="left:100.3px;top:131.1px;width:191.5px;height:18.5px"></div>
<div class="lbl" style="left:48px;top:162.0px;width:47px">Type</div>
<div class="fld" style="left:100.3px;top:159.1px;width:191.5px;height:18.5px"></div>
<div class="t" style="left:106.0px;top:162.0px;color:#dcdcdc">position</div>
<svg style="left:276.0px;top:166.0px" width="10" height="6"><path d="M0 0.3H10L5 5.6Z" fill="#d8d8d8"/></svg>
<div class="lbl" style="left:48px;top:190.0px;width:47px">End</div>
<div class="fld" style="left:100.3px;top:187.1px;width:191.5px;height:18.5px"></div>
<svg style="left:105.6px;top:190.3px" width="12" height="13"><use href="#cube"/></svg>
<div class="t" style="left:124.0px;top:190.0px;color:#dcdcdc">mixamorig:LeftHand</div>
<svg style="left:275.5px;top:190.3px" width="13" height="13"><use href="#pick"/></svg>
<div class="lbl" style="left:48px;top:218.0px;width:47px">Root</div>
<div class="fld" style="left:100.3px;top:215.1px;width:191.5px;height:18.5px"></div>
<svg style="left:105.6px;top:218.3px" width="12" height="13"><use href="#cube"/></svg>
<div class="t" style="left:124.0px;top:218.0px;color:#dcdcdc">mixamorig:LeftArm</div>
<svg style="left:275.5px;top:218.3px" width="13" height="13"><use href="#pick"/></svg>
<svg style="left:33.5px;top:250.0px" width="10" height="6"><path d="M0 0.3H10L5 5.6Z" fill="#b4b4b4"/></svg>
<div class="lbl" style="left:48px;top:246.0px;width:47px">Bone Datas</div>
<div class="t" style="left:63.0px;top:274.3px;color:#cfcfcf">0</div>
<div class="cb" style="margin:-0.5px 0 0 -1px;width:15px;height:15px;left:100.5px;top:273.5px"><svg style="left:1px;top:1px" width="11" height="11" viewBox="0 0 11 11"><path d="M1.8 5.6L4.4 8.4L9.4 2.8" stroke="#fff" stroke-width="1.8" fill="none"/></svg></div>
<div class="t" style="left:118.0px;top:273.3px;color:#dcdcdc">mixamorig:LeftHand</div>
<div class="t" style="left:63.0px;top:302.3px;color:#cfcfcf">1</div>
<div class="cb" style="margin:-0.5px 0 0 -1px;width:15px;height:15px;left:100.5px;top:301.5px"><svg style="left:1px;top:1px" width="11" height="11" viewBox="0 0 11 11"><path d="M1.8 5.6L4.4 8.4L9.4 2.8" stroke="#fff" stroke-width="1.8" fill="none"/></svg></div>
<div class="t" style="left:118.0px;top:301.3px;color:#dcdcdc">mixamorig:LeftForeArm</div>
<div class="t" style="left:63.0px;top:330.3px;color:#cfcfcf">2</div>
<div class="cb" style="margin:-0.5px 0 0 -1px;width:15px;height:15px;left:100.5px;top:329.5px"><svg style="left:1px;top:1px" width="11" height="11" viewBox="0 0 11 11"><path d="M1.8 5.6L4.4 8.4L9.4 2.8" stroke="#fff" stroke-width="1.8" fill="none"/></svg></div>
<div class="t" style="left:118.0px;top:329.3px;color:#dcdcdc">mixamorig:LeftArm</div>
<div class="lbl" style="left:48px;top:358.3px;width:47px">Fixed End</div>
<div class="cb off" style="margin:-0.5px 0 0 -1px;width:15px;height:15px;left:100.5px;top:358.0px"></div>
<div class="lbl" style="left:48px;top:386.1px;width:47px">alignWithTarget</div>
<div class="fld" style="left:100.3px;top:383.2px;width:191.5px;height:18.5px"></div>
<div class="t" style="left:106.0px;top:386.1px;color:#dcdcdc">no</div>
<svg style="left:276.0px;top:390.0px" width="10" height="6"><path d="M0 0.3H10L5 5.6Z" fill="#d8d8d8"/></svg>
<div class="lbl" style="left:48px;top:414.1px;width:47px">Target</div>
<div class="fld" style="left:100.3px;top:411.2px;width:191.5px;height:18.5px"></div>
<svg class="cj" width="12.00" height="14.40" viewBox="0 0 12.00 14.40" style="left:106px;top:413.4px"><text x="0" y="10.6" fill="#dcdcdc">无</text></svg>
<div class="t" style="left:121.5px;top:414.1px;color:#dcdcdc">(Sprite3D)</div>
<svg style="left:275.5px;top:414.4px" width="13" height="13"><use href="#pick"/></svg>
<div class="lbl" style="left:48px;top:470.1px;width:47px">Pole Target</div>
<div class="fld" style="left:100.3px;top:467.2px;width:191.5px;height:18.5px"></div>
<svg class="cj" width="12.00" height="14.40" viewBox="0 0 12.00 14.40" style="left:106px;top:469.4px"><text x="0" y="10.6" fill="#dcdcdc">无</text></svg>
<div class="t" style="left:121.5px;top:470.1px;color:#dcdcdc">(Sprite3D)</div>
<svg style="left:275.5px;top:470.4px" width="13" height="13"><use href="#pick"/></svg>
<div class="a" style="left:48px;top:441.1px;width:47px;height:16px;overflow:hidden"><svg class="cj" width="60.00" height="14.40" viewBox="0 0 60.00 14.40" style="left:0;top:0.5px"><text x="0" y="10.6" fill="#cfcfcf">用提示目标</text></svg></div>
<div class="cb off" style="margin:-0.5px 0 0 -1px;width:15px;height:15px;left:100.5px;top:441.8px"></div>
<div class="lbl" style="left:48px;top:498.1px;width:47px">Max Error</div>
<div class="fld" style="left:100.3px;top:495.2px;width:59.5px;height:18.5px"></div>
<div class="t" style="left:106.0px;top:498.1px;color:#dcdcdc">0.001</div>
<div class="lbl" style="left:48px;top:525.5px;width:47px">Blend Weight</div>
<div class="a" style="left:102px;top:530.5px;width:104px;height:2px;background:#5a5a5a;border-radius:1px"></div>
<div class="a" style="left:205.5px;top:524.7px;width:13px;height:13px;border-radius:7px;background:#4c74c6"></div>
<div class="fld" style="left:229.0px;top:522.8px;width:63.0px;height:18.5px"></div>
<div class="t" style="left:235.5px;top:526.0px;color:#dcdcdc">1</div>
</div>
<div class="a" style="left:296.2px;top:61px;width:8px;height:552px;border:1px solid #3d3d3d;border-radius:4px"></div>
<div class="a" style="left:297.2px;top:224px;width:6px;height:292px;background:#575757;border-radius:3px"></div>
</div>

<div class="a" style="left:0;top:653px;width:1184px;height:20px;background:#1e1e1e"></div>
<!-- annotations -->
<svg style="left:0;top:0;z-index:50;pointer-events:none" width="1184" height="673" viewBox="0 0 1184 673">
<rect x="133" y="297.7" width="166.4" height="29" rx="5" fill="none" stroke="#f04a46" stroke-width="4"/>
<rect x="159" y="346.6" width="172" height="24" rx="5" fill="none" stroke="#f04a46" stroke-width="4"/>
<path d="M327.0 314.6L867.1 324.6L867.0 333.5L895.2 319.8L867.4 305.5L867.3 314.3L327.0 311.4Z" fill="#f04a46" stroke="#f04a46" stroke-width="4" stroke-linejoin="round"/>
<path d="M353.2 360.0L864.9 299.4L866.0 307.6L892.0 290.2L862.5 279.8L863.5 288.1L352.8 356.8Z" fill="#f04a46" stroke="#f04a46" stroke-width="4" stroke-linejoin="round"/>
</svg>

</div></body></html>
